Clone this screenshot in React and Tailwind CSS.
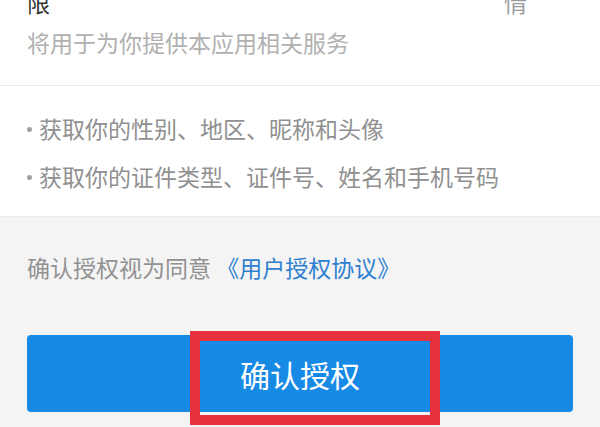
export default function App() {
  const scopes = [
    "获取你的性别、地区、昵称和头像",
    "获取你的证件类型、证件号、姓名和手机号码"
  ];

  return (
    <div className="w-[600px] h-[427px] overflow-hidden bg-[#f4f4f4] flex flex-col font-['Noto_Sans_CJK_SC','Noto_Sans',sans-serif]">
      {/* 权限说明 */}
      <div className="h-[86px] bg-white border-b border-[#ebebeb] px-[27px] flex flex-col">
        <div className="-mt-[9px] h-[23px] flex justify-between text-[23px] leading-[23px]">
          <span className="text-[#333]">限</span>
          <span className="text-[#9a9a9a] mr-[46px]">情</span>
        </div>
        <div className="mt-[17px] text-[23px] leading-[23px] text-[#b0b0b0]">
          将用于为你提供本应用相关服务
        </div>
      </div>

      {/* 授权内容 */}
      <div className="h-[131px] bg-white border-b border-[#ececec] px-[27px] pt-[31px] flex flex-col gap-[25px]">
        {scopes.map((s) => (
          <div key={s} className="flex items-center h-[23px] text-[23px] leading-[23px] text-[#909090]">
            <span className="w-[5px] h-[5px] rounded-full bg-[#a0a0a0] mr-[7px] mt-[2px] shrink-0" />
            <span>{s}</span>
          </div>
        ))}
      </div>

      <div className="mt-[39px] px-[27px] text-[23px] leading-[23px] text-[#929292]">
        确认授权视为同意 <span className="text-[#2f80cf]">《用户授权协议》</span>
      </div>

      <div className="relative mt-[56px] mx-[27px] h-[77px] rounded-[4px] bg-[#178ae6] flex items-center justify-center">
        <span className="text-white text-[30px] leading-[30px]">确认授权</span>
        <div className="absolute left-[163px] -top-[4px] w-[250px] h-[94px] border-[10px] border-[#e6323f]" />
      </div>
    </div>
  );
}
